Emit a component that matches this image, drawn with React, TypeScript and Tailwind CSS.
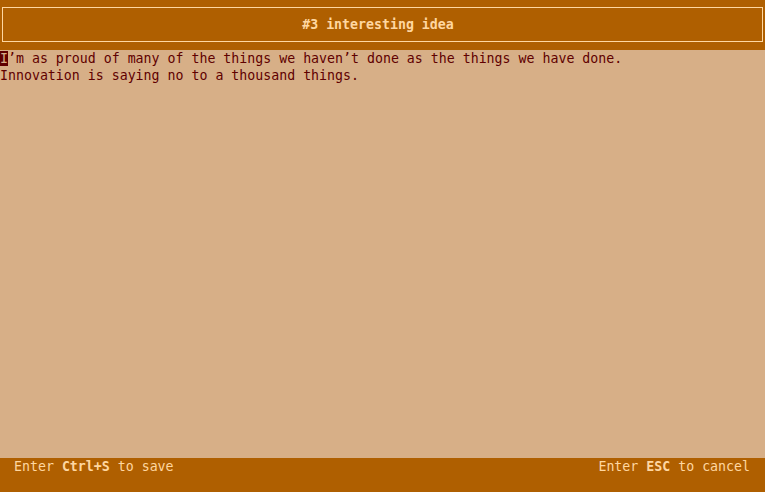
import React from "react";

export default function App() {
  const mono = { fontFamily: '"DejaVu Sans Mono", monospace' };
  return (
    <div
      className="w-[765px] h-[492px] flex flex-col bg-[#d7af87] text-[13.25px] leading-[17px] overflow-hidden"
      style={mono}
    >
      <div className="h-[50px] bg-[#af5f00] pt-[7px] px-[2px] shrink-0">
        <div className="h-[35px] border border-[#ffd7a0] flex items-center justify-center pr-[9px] font-bold text-[#ffd7a0]">
          #3 interesting idea
        </div>
      </div>
      <div className="flex-1 text-[#5f0000] pt-0 whitespace-pre">
        <div>
          <span className="bg-[#5f0000] text-[#d7af87]">I</span>’m as proud of many of the things we haven’t done as the things we have done.
        </div>
        <div>Innovation is saying no to a thousand things.</div>
      </div>
      <div className="h-[34px] bg-[#af5f00] shrink-0 flex justify-between pl-[14px] pr-[15px] text-[#ffd7a0] whitespace-pre">
        <div>
          Enter <span className="font-bold">Ctrl+S</span> to save
        </div>
        <div>
          Enter <span className="font-bold">ESC</span> to cancel
        </div>
      </div>
    </div>
  );
}
